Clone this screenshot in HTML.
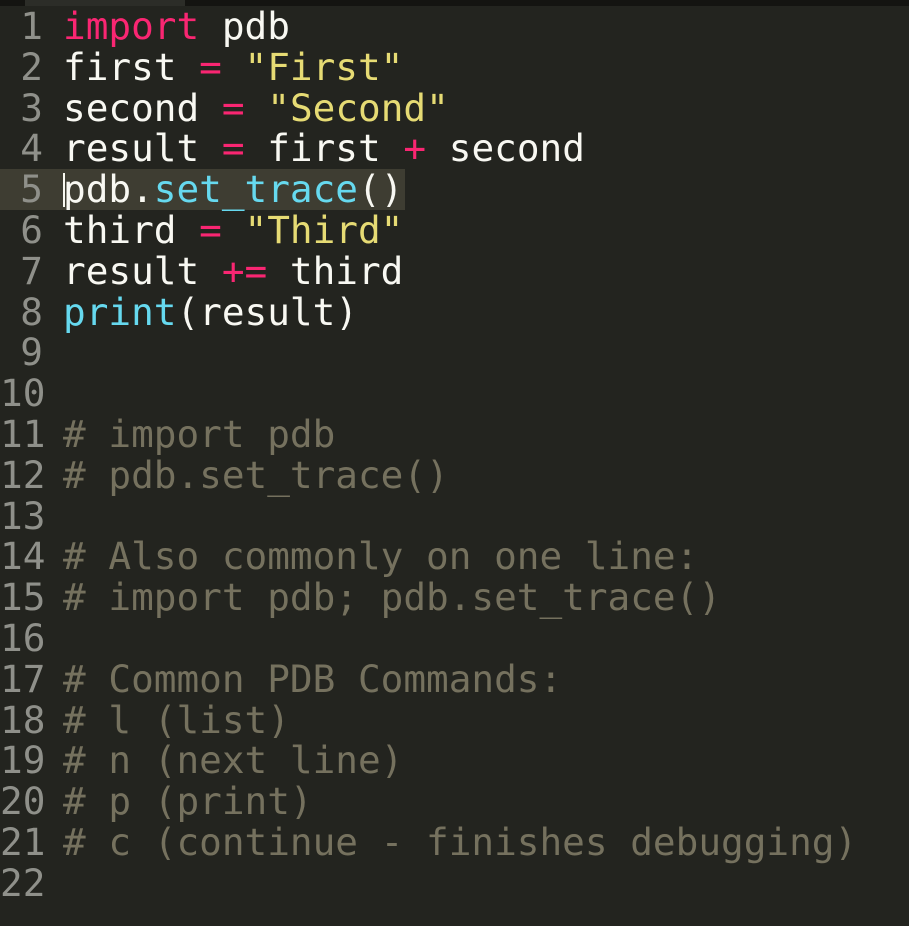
<!DOCTYPE html>
<html><head><meta charset="utf-8"><style>
html,body{margin:0;padding:0;background:#23241f;width:909px;height:926px;overflow:hidden}
.top{position:absolute;left:0;top:0;width:909px;height:6px;background:#141411}
.tab{position:absolute;left:25px;top:0;width:160px;height:6px;background:#2c2d28}
.code{position:absolute;top:6px;left:0;font-family:"DejaVu Sans Mono","Liberation Mono",monospace;font-size:37.7px;line-height:40.8px;color:#f8f8f2}
.ln{position:absolute;left:0;width:43px;text-align:right;color:#8f908a;white-space:pre}
.tx{position:absolute;left:63px;white-space:pre}
.l{position:relative;height:40.8px}
.hl{position:absolute;left:0;top:0;width:405px;height:40.8px;background:#3e3d32}
.k{color:#f92672}.s{color:#e6db74}.f{color:#66d9ef}.c{color:#75715e}
.cur{position:absolute;left:63px;top:4px;width:2px;height:34px;background:#f8f8f0}
</style></head><body>
<div class="top"></div><div class="tab"></div>
<div class="code"><div class="l"><span class="ln">1</span><span class="tx"><span class="k">import</span> pdb</span></div><div class="l"><span class="ln">2</span><span class="tx">first <span class="k">=</span> <span class="s">"First"</span></span></div><div class="l"><span class="ln">3</span><span class="tx">second <span class="k">=</span> <span class="s">"Second"</span></span></div><div class="l"><span class="ln">4</span><span class="tx">result <span class="k">=</span> first <span class="k">+</span> second</span></div><div class="l"><div class="hl"></div><span class="ln">5</span><span class="tx">pdb.<span class="f">set_trace</span>()</span><div class="cur"></div></div><div class="l"><span class="ln">6</span><span class="tx">third <span class="k">=</span> <span class="s">"Third"</span></span></div><div class="l"><span class="ln">7</span><span class="tx">result <span class="k">+=</span> third</span></div><div class="l"><span class="ln">8</span><span class="tx"><span class="f">print</span>(result)</span></div><div class="l"><span class="ln">9</span></div><div class="l"><span class="ln">10</span></div><div class="l"><span class="ln">11</span><span class="tx c"># import pdb</span></div><div class="l"><span class="ln">12</span><span class="tx c"># pdb.set_trace()</span></div><div class="l"><span class="ln">13</span></div><div class="l"><span class="ln">14</span><span class="tx c"># Also commonly on one line:</span></div><div class="l"><span class="ln">15</span><span class="tx c"># import pdb; pdb.set_trace()</span></div><div class="l"><span class="ln">16</span></div><div class="l"><span class="ln">17</span><span class="tx c"># Common PDB Commands:</span></div><div class="l"><span class="ln">18</span><span class="tx c"># l (list)</span></div><div class="l"><span class="ln">19</span><span class="tx c"># n (next line)</span></div><div class="l"><span class="ln">20</span><span class="tx c"># p (print)</span></div><div class="l"><span class="ln">21</span><span class="tx c"># c (continue - finishes debugging)</span></div><div class="l"><span class="ln">22</span></div></div>
</body></html>
